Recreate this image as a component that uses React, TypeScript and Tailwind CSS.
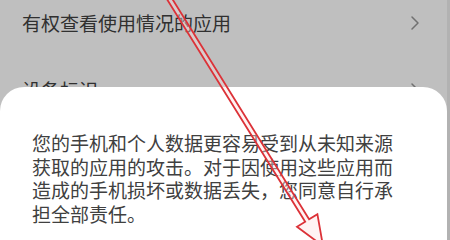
import type { ReactNode } from "react"

const font = { fontFamily: '"Noto Sans CJK SC", "Noto Sans", sans-serif' }

function Chevron() {
  return (
    <svg width="10" height="16" viewBox="0 0 10 16" className="shrink-0">
      <path d="M2 2 L8 8 L2 14" fill="none" stroke="#707070" strokeWidth="1.5" strokeLinecap="round" strokeLinejoin="round" />
    </svg>
  )
}

function Row({ children }: { children: ReactNode }) {
  return (
    <div className="flex h-[67px] items-center justify-between pl-[22px] pr-[30px]">
      <span className="text-[19px] leading-none text-[#303030]">{children}</span>
      <Chevron />
    </div>
  )
}

// hollow red arrow drawn over the screenshot
function Arrow() {
  const sx = 164
  const sy = -10
  const tx = 323
  const ty = 246
  const len = Math.hypot(tx - sx, ty - sy)
  const ux = (tx - sx) / len
  const uy = (ty - sy) / len
  const px = uy
  const py = -ux
  const headLen = 30
  const bx = tx - ux * headLen
  const by = ty - uy * headLen
  const sw = 2.3
  const hw = 12
  const pts = [
    [sx + px * sw, sy + py * sw],
    [bx + px * sw, by + py * sw],
    [bx + px * hw, by + py * hw],
    [tx, ty],
    [bx - px * hw, by - py * hw],
    [bx - px * sw, by - py * sw],
    [sx - px * sw, sy - py * sw],
  ]
    .map((p) => p.map((n) => n.toFixed(1)).join(","))
    .join(" ")
  return (
    <svg className="pointer-events-none absolute inset-0" width="450" height="240" viewBox="0 0 450 240">
      <polygon points={pts} fill="rgba(255,225,225,0.4)" stroke="#dc3238" strokeWidth="1.8" strokeLinejoin="miter" />
    </svg>
  )
}

export default function App() {
  return (
    <div className="relative h-[240px] w-[450px] overflow-hidden bg-[#bfbfbf]" style={font}>
      <div className="absolute right-0 top-0 h-full w-[3px] bg-[#b2b2b2]" />

      {/* settings list (dimmed) */}
      <div className="-mt-[11px] flex flex-col">
        <Row>有权查看使用情况的应用</Row>
        <Row>设备标识</Row>
      </div>

      {/* bottom sheet */}
      <div className="absolute left-0 top-[87px] h-[170px] w-[447px] rounded-t-[24px] bg-white pl-[32px] pt-[44px]">
        <div className="flex flex-col text-[19px] leading-[23.5px] text-[#404040]">
          <span className="whitespace-nowrap">您的手机和个人数据更容易受到从未知来源</span>
          <span className="whitespace-nowrap">获取的应用的攻击。对于因使用这些应用而</span>
          <span className="whitespace-nowrap">造成的手机损坏或数据丢失，您同意自行承</span>
          <span className="whitespace-nowrap">担全部责任。</span>
        </div>
      </div>

      <Arrow />
    </div>
  )
}
